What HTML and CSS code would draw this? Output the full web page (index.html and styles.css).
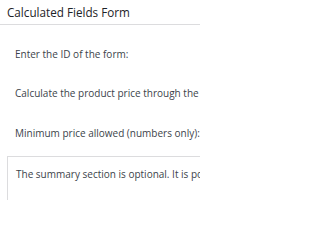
FILE: index.html
```html
<!DOCTYPE html>
<html>
<head>
<meta charset="utf-8">
<link rel="stylesheet" href="styles.css">
</head>
<body>
<div class="panel">
  <div class="header">Calculated Fields Form</div>
  <div class="content">
    <p class="row r1">Enter the ID of the form:</p>
    <p class="row r2">Calculate the product price through the form</p>
    <p class="row r3">Minimum price allowed (numbers only):</p>
    <div class="summary">
      <p>The summary section is optional. It is possible to use it</p>
    </div>
  </div>
</div>
</body>
</html>
```
FILE: styles.css
```css
html, body {
  margin: 0;
  padding: 0;
  background: #fff;
  overflow: hidden;
}
body {
  width: 200px;
  height: 200px;
  font-family: "Open Sans", "Noto Sans", sans-serif;
  color: #3c434a;
}
.panel {
  width: 100%;
}
.header {
  height: 25px;
  box-sizing: border-box;
  padding: 5px 7px 0;
  font-size: 11.7px;
  line-height: 15px;
  color: #1d2327;
  border-bottom: 1px solid #dcdcde;
  white-space: nowrap;
}
.content {
  padding: 0 0 0 7px;
}
.row {
  margin: 0;
  padding-left: 8px;
  font-size: 10px;
  white-space: nowrap;
  line-height: 14px;
}
.r1 {
  margin-top: 21.5px;
  height: 39px;
}
.r2 {
  height: 40px;
}
.r3 {
  height: 30.5px;
}
.summary {
  border: 1px solid #dcdcde;
  border-right: none;
  padding: 9.5px 0 30px 8px;
  font-size: 10px;
  white-space: nowrap;
}
.summary p {
  margin: 0;
  line-height: 14px;
}
```
